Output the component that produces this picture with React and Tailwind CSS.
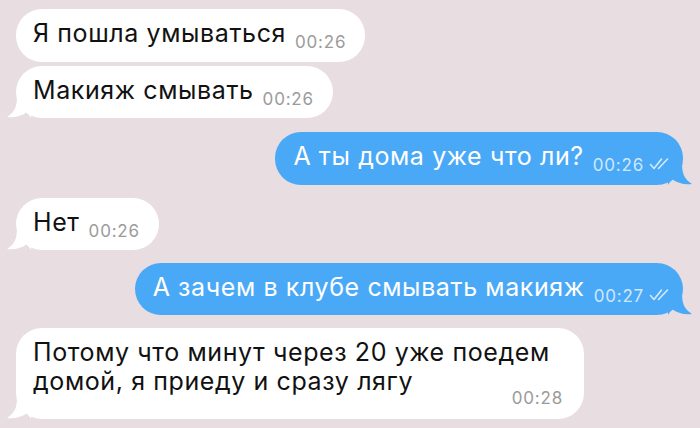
import React from "react";

const font = { fontFamily: "Inter, 'Liberation Sans', sans-serif" };

function LeftTail() {
  return (
    <svg className="absolute left-[-9px] bottom-0" width="24" height="22" viewBox="0 0 24 22">
      <path d="M10 0 C10 10 8 16 0 21 C8 22 15 20 20 16 L24 22 L24 0 Z" fill="#ffffff" />
    </svg>
  );
}

function RightTail() {
  return (
    <svg className="absolute right-[-9px] bottom-0" width="24" height="22" viewBox="0 0 24 22">
      <path d="M14 0 C14 10 16 16 24 21 C16 22 9 20 4 16 L0 22 L0 0 Z" fill="#4aa9f7" />
    </svg>
  );
}

function Checks() {
  return (
    <svg width="20" height="12" viewBox="0 0 20 12" className="inline-block ml-[5px] align-[-5px]">
      <path d="M1.5 6.5 L5 10.5 L12.5 1" fill="none" stroke="#d6ecfd" strokeWidth="1.5" strokeLinecap="round" strokeLinejoin="round" />
      <path d="M9.5 10.5 L18.5 1" fill="none" stroke="#d6ecfd" strokeWidth="1.5" strokeLinecap="round" />
    </svg>
  );
}

function In({ text, time, tail, className = "" }) {
  return (
    <div className={"relative self-start bg-white rounded-[26px] pl-[17px] pr-[19px] flex items-center " + className}>
      <div className="text-[25px] tracking-[0.6px] text-[#111] whitespace-nowrap">
        {text}
        <span className="text-[17px] tracking-[0.8px] text-[#9b9b9b] ml-[9px] align-[-6px]">{time}</span>
      </div>
      {tail && <LeftTail />}
    </div>
  );
}

function Out({ text, time, className = "" }) {
  return (
    <div className={"relative self-end mr-[17px] bg-[#4aa9f7] rounded-[26px] pl-[18px] pr-[14px] flex items-center " + className}>
      <div className="text-[25px] tracking-[0.6px] text-white whitespace-nowrap">
        {text}
        <span className="text-[17px] tracking-[0.8px] text-[#cfe7fd] ml-[9px] align-[-6px]">{time}</span>
        <Checks />
      </div>
      <RightTail />
    </div>
  );
}

export default function App() {
  return (
    <div style={font} className="w-[700px] h-[428px] bg-[#e8dde0] overflow-hidden flex flex-col pt-[9px] pl-[16px]">
      <In text="Я пошла умываться" time="00:26" className="h-[53px]" />
      <In text="Макияж смывать" time="00:26" tail className="h-[52px] mt-[4px]" />
      <Out text="А ты дома уже что ли?" time="00:26" className="h-[53px] mt-[14px]" />
      <In text="Нет" time="00:26" tail className="h-[52px] mt-[13px]" />
      <Out text="А зачем в клубе смывать макияж" time="00:27" className="h-[52px] mt-[13px]" />
      <div className="relative self-start mt-[13px] bg-white rounded-[26px] w-[568px] h-[91px] pl-[17px] pr-[21px] pt-[10px]">
        <div className="text-[25px] tracking-[0.6px] leading-[29px] text-[#111]">
          <div className="whitespace-nowrap">Потому что минут через 20 уже поедем</div>
          <div className="flex items-baseline justify-between">
            <span>домой, я приеду и сразу лягу</span>
            <span className="text-[17px] tracking-[0.8px] text-[#9b9b9b] relative top-[14px]">00:28</span>
          </div>
        </div>
        <LeftTail />
      </div>
    </div>
  );
}
